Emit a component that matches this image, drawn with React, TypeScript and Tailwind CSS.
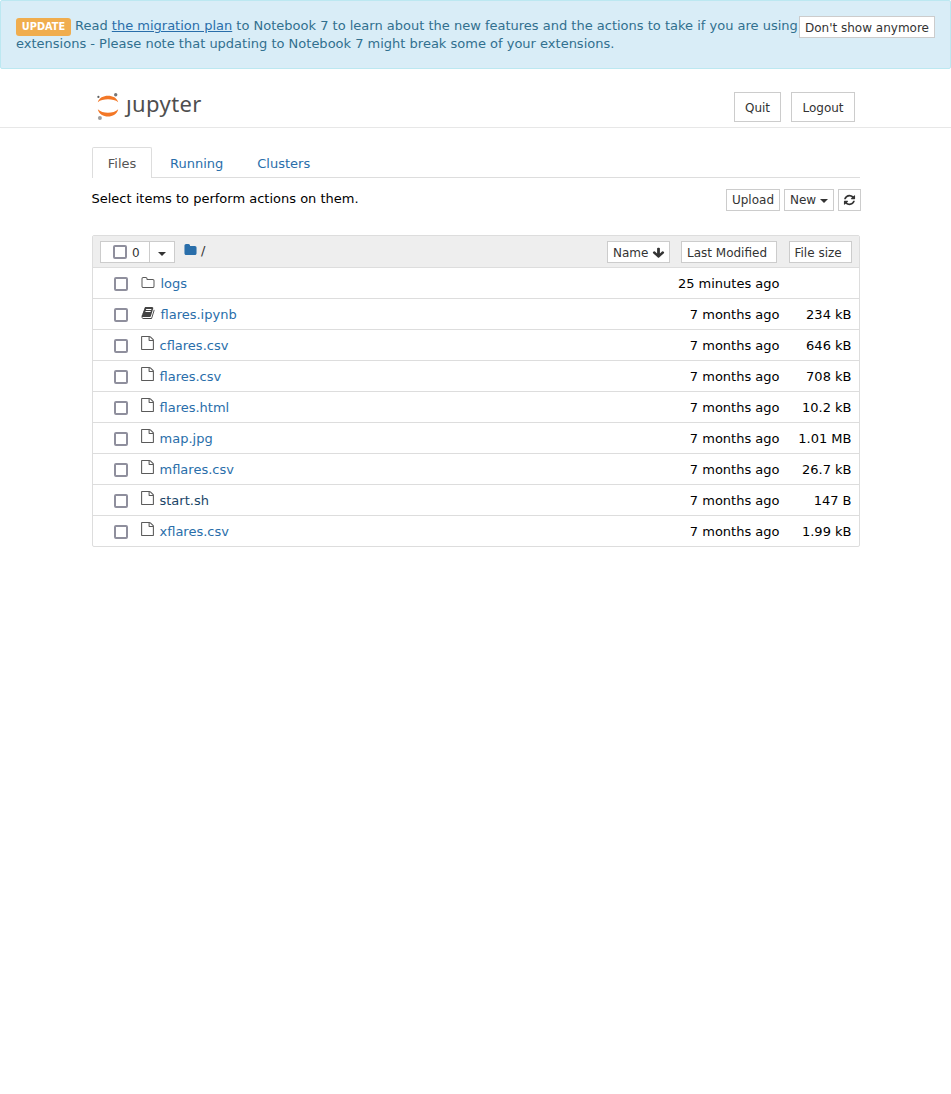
import type { ReactNode } from "react";

const PATHS = {
  folder:
    "M1728 608v704q0 92-66 158t-158 66h-1216q-92 0-158-66t-66-158v-960q0-92 66-158t158-66h320q92 0 158 66t66 158v32h672q92 0 158 66t66 158z",
  folderOpen:
    "M1600 1312v-704q0-40-28-68t-68-28h-704q-40 0-68-28t-28-68v-64q0-40-28-68t-68-28h-320q-40 0-68 28t-28 68v960q0 40 28 68t68 28h1216q40 0 68-28t28-68zm128-704v704q0 92-66 158t-158 66h-1216q-92 0-158-66t-66-158v-960q0-92 66-158t158-66h320q92 0 158 66t66 158v32h672q92 0 158 66t66 158z",
  refresh:
    "M1639 1056q0 5-1 7-64 268-268 434.5t-478 166.5q-146 0-282.5-55t-243.5-157l-129 129q-19 19-45 19t-45-19-19-45v-448q0-26 19-45t45-19h448q26 0 45 19t19 45-19 45l-137 137q71 66 161 102t187 36q134 0 250-65t186-179q11-17 53-117 8-23 30-23h192q13 0 22.5 9.5t9.5 22.5zm25-800v448q0 26-19 45t-45 19h-448q-26 0-45-19t-19-45 19-45l138-138q-148-137-349-137-134 0-250 65t-186 179q-11 17-53 117-8 23-30 23h-199q-13 0-22.5-9.5t-9.5-22.5v-7q65-268 270-434.5t480-166.5q146 0 284 55.5t245 156.5l130-129q19-19 45-19t45 19 19 45z",
  arrowDown:
    "M1675 832q0 53-37 90l-651 652q-39 37-91 37-53 0-90-37l-651-652q-38-36-38-90 0-53 38-91l74-75q39-37 91-37 53 0 90 37l294 294v-704q0-52 38-90t90-38h128q52 0 90 38t38 90v704l294-294q37-37 90-37 52 0 91 37l75 75q37 39 37 91z",
  book: "M1703 478q40 57 18 129l-275 906q-19 64-76.5 107.5t-122.5 43.5h-923q-77 0-148.5-53.5t-99.5-131.5q-24-67-2-127 0-4 3-27t4-37q1-8-3-21.5t-3-19.5q2-11 8-21t16.5-23.5 16.5-23.5q23-38 45-91.5t30-91.5q3-10 .5-30t-.5-28q3-11 17-28t17-23q21-36 42-92t25-90q1-9-2.5-32t.5-28q4-13 22-30.5t22-22.5q19-26 42.5-84.5t27.5-96.5q1-8-3-25.5t-2-26.5q2-8 9-18t18-23 17-21q8-12 16.5-30.5t15-35 16-36 19.5-32 26.5-23.5 36-11.5 47.5 5.5l-1 3q38-9 51-9h761q74 0 114 56t18 130l-274 906q-36 119-71.5 153.5t-128.5 34.5h-869q-27 0-38 15-11 16-1 43 24 70 144 70h923q29 0 56-15.5t35-41.5l300-987q7-22 5-57 38 15 59 43zm-1064 2q-4 13 2 22.5t20 9.5h608q13 0 25.5-9.5t16.5-22.5l21-64q4-13-2-22.5t-20-9.5h-608q-13 0-25.5 9.5t-16.5 22.5zm-83 256q-4 13 2 22.5t20 9.5h608q13 0 25.5-9.5t16.5-22.5l21-64q4-13-2-22.5t-20-9.5h-608q-13 0-25.5 9.5t-16.5 22.5z",
  file: "M1596 380q28 28 48 76t20 88v1152q0 40-28 68t-68 28h-1344q-40 0-68-28t-28-68v-1600q0-40 28-68t68-28h896q40 0 88 20t76 48zm-444-244v376h376q-10-29-22-41l-313-313q-12-12-41-22zm384 1528v-1024h-416q-40 0-68-28t-28-68v-416h-768v1536h1280z",
};

function Icon({ name, className }: { name: keyof typeof PATHS; className: string }) {
  return (
    <svg
      viewBox="0 0 1792 1792"
      preserveAspectRatio="none"
      fill="currentColor"
      className={`shrink-0 ${className}`}
    >
      <path d={PATHS[name]} />
    </svg>
  );
}

function Logo() {
  return (
    <div className="flex h-[30px] w-[116px] text-[#4e4e4e]">
      <svg viewBox="0 0 32 30" className="h-[30px] w-8 shrink-0">
        <path d="M5.8 12.2C8 3.6 24 3.6 26.2 12.2C21.5 8.4 10.5 8.4 5.8 12.2Z" fill="#f37726" />
        <path d="M5.8 19.2C8 28.9 24 28.9 26.2 19.2C21.5 23.9 10.5 23.9 5.8 19.2Z" fill="#f37726" />
        <circle cx="23.7" cy="4.8" r="1.7" fill="#767677" />
        <circle cx="6.4" cy="6.9" r="1.1" fill="#616262" />
        <circle cx="7.9" cy="28" r="2" fill="#9e9e9e" />
      </svg>
      <span className="-mt-[2px] ml-[2px] font-['Noto_Sans',sans-serif] text-[22px] leading-[30px] tracking-[0.4px]">
        ȷupyter
      </span>
    </div>
  );
}

function Button({ children, className }: { children: ReactNode; className: string }) {
  return (
    <button
      className={`flex shrink-0 items-center border border-[#ccc] bg-white text-xs whitespace-nowrap text-[#333] ${className}`}
    >
      {children}
    </button>
  );
}

function Checkbox() {
  return <span className="block size-[14px] shrink-0 rounded-[2px] border-2 border-[#8f8f9d] bg-white" />;
}

function Caret() {
  return <span className="block h-0 w-0 border-x-4 border-t-4 border-x-transparent border-t-[#333]" />;
}

type Entry = { kind: "folder" | "notebook" | "file"; name: string; modified: string; size: string; focused?: boolean };

const ENTRIES: Entry[] = [
  { kind: "folder", name: "logs", modified: "25 minutes ago", size: "" },
  { kind: "notebook", name: "flares.ipynb", modified: "7 months ago", size: "234 kB" },
  { kind: "file", name: "cflares.csv", modified: "7 months ago", size: "646 kB" },
  { kind: "file", name: "flares.csv", modified: "7 months ago", size: "708 kB" },
  { kind: "file", name: "flares.html", modified: "7 months ago", size: "10.2 kB" },
  { kind: "file", name: "map.jpg", modified: "7 months ago", size: "1.01 MB" },
  { kind: "file", name: "mflares.csv", modified: "7 months ago", size: "26.7 kB" },
  { kind: "file", name: "start.sh", modified: "7 months ago", size: "147 B", focused: true },
  { kind: "file", name: "xflares.csv", modified: "7 months ago", size: "1.99 kB" },
];

function Row({ entry }: { entry: Entry }) {
  return (
    <div className="flex h-[31px] border-t border-[#ddd] pr-[7.5px] leading-[32px]">
      <div className="mt-[9px] ml-[21px]">
        <Checkbox />
      </div>
      <div className="ml-[13px] w-[19px] shrink-0 text-[#5a5a5a]">
        {entry.kind === "folder" && <Icon name="folderOpen" className="mt-2 size-[14px]" />}
        {entry.kind === "notebook" && <Icon name="book" className="mt-[7px] h-[14px] w-[14px] text-[#444]" />}
        {entry.kind === "file" && <Icon name="file" className="mt-[6px] -ml-px h-[14px] w-[15px]" />}
      </div>
      <a
        className={`${entry.kind === "file" ? "-ml-[0.5px]" : "ml-[0.5px]"} ${entry.focused ? "text-[#1b4568]" : "text-[#296eaa]"}`}
      >
        {entry.name}
      </a>
      <span className="ml-auto">{entry.modified}</span>
      <span className="w-[72px] text-right">{entry.size}</span>
    </div>
  );
}

export default function App() {
  return (
    <div className="min-h-screen bg-white font-['DejaVu_Sans',sans-serif] text-[13px] leading-[18px] text-black">
      <div className="flex h-[69px] items-start rounded-[2px] border border-[#bce8f1] bg-[#d9edf7] px-[15px] pt-[15px] text-[#31708f]">
        <p className="w-[783px] shrink-0 pt-px whitespace-nowrap">
          <span className="relative top-px mr-1 inline-block h-[18px] w-[55px] rounded-[3px] bg-[#f0ad4e] text-center align-top text-[9.75px] leading-[18px] font-bold text-white">
            UPDATE
          </span>
          Read <a className="text-[#296eaa] underline">the migration plan</a> to Notebook 7 to learn about the new
          features and the actions to take if you are using
          <br />
          extensions - Please note that updating to Notebook 7 might break some of your extensions.
        </p>
        <Button className="h-[22px] w-[136px] justify-center pt-px">Don't show anymore</Button>
      </div>

      <header className="flex h-[59px] border-b border-[#e7e7e7] pt-[21px] pr-24 pl-[92px]">
        <Logo />
        <div className="mt-[2px] ml-auto flex gap-[10px]">
          <Button className="h-[30px] w-[47px] justify-center pt-[2px]">Quit</Button>
          <Button className="h-[30px] w-16 justify-center pt-[2px]">Logout</Button>
        </div>
      </header>

      <main className="ml-[92px] w-[768px]">
        <nav className="mt-[19px] flex h-[31px] border-b border-[#ddd] leading-[31px] text-[#296eaa]">
          <a className="h-[31px] w-[60px] rounded-t-[2px] border border-b-0 border-[#ddd] bg-white text-center text-[#555]">
            Files
          </a>
          <a className="ml-[18px] pt-px">Running</a>
          <a className="ml-[34px] pt-px">Clusters</a>
        </nav>

        <div className="-mr-px flex h-[57px] pt-[11px]">
          <p className="-ml-[0.5px] pt-px">Select items to perform actions on them.</p>
          <div className="ml-auto flex gap-1">
            <Button className="h-[22px] w-[54px] justify-center">Upload</Button>
            <Button className="h-[22px] w-[50px] justify-center gap-1">
              New
              <span className="pt-[2px]">
                <Caret />
              </span>
            </Button>
            <Button className="h-[22px] w-[23px] pl-1">
              <Icon name="refresh" className="h-3 w-[13px]" />
            </Button>
          </div>
        </div>

        <section className="rounded-[2px] border border-[#ddd]">
          <div className="flex h-[31px] bg-[#eee] pt-[5px] pr-[7px] pl-[7px]">
            <Button className="h-[22px] w-[50px] gap-[5px] pl-3">
              <Checkbox />
              <span className="pt-[2px]">0</span>
            </Button>
            <Button className="-ml-px h-[22px] w-[26px] justify-center pt-1">
              <Caret />
            </Button>
            <Icon name="folder" className="mt-[2px] ml-[9px] h-[14px] w-[13px] text-[#296eaa]" />
            <span className="ml-1 pt-px text-[#333]">/</span>
            <div className="ml-auto flex">
              <Button className="h-[22px] w-[63px] gap-1 pt-[2px] pl-[5px]">
                Name <Icon name="arrowDown" className="mb-px h-3 w-[13px]" />
              </Button>
              <Button className="ml-[11px] h-[22px] w-24 pt-[2px] pl-[5px]">Last Modified</Button>
              <Button className="ml-3 h-[22px] w-[63px] pt-[2px] pl-[4.5px]">File size</Button>
            </div>
          </div>
          {ENTRIES.map((entry) => (
            <Row key={entry.name} entry={entry} />
          ))}
        </section>
      </main>
    </div>
  );
}
